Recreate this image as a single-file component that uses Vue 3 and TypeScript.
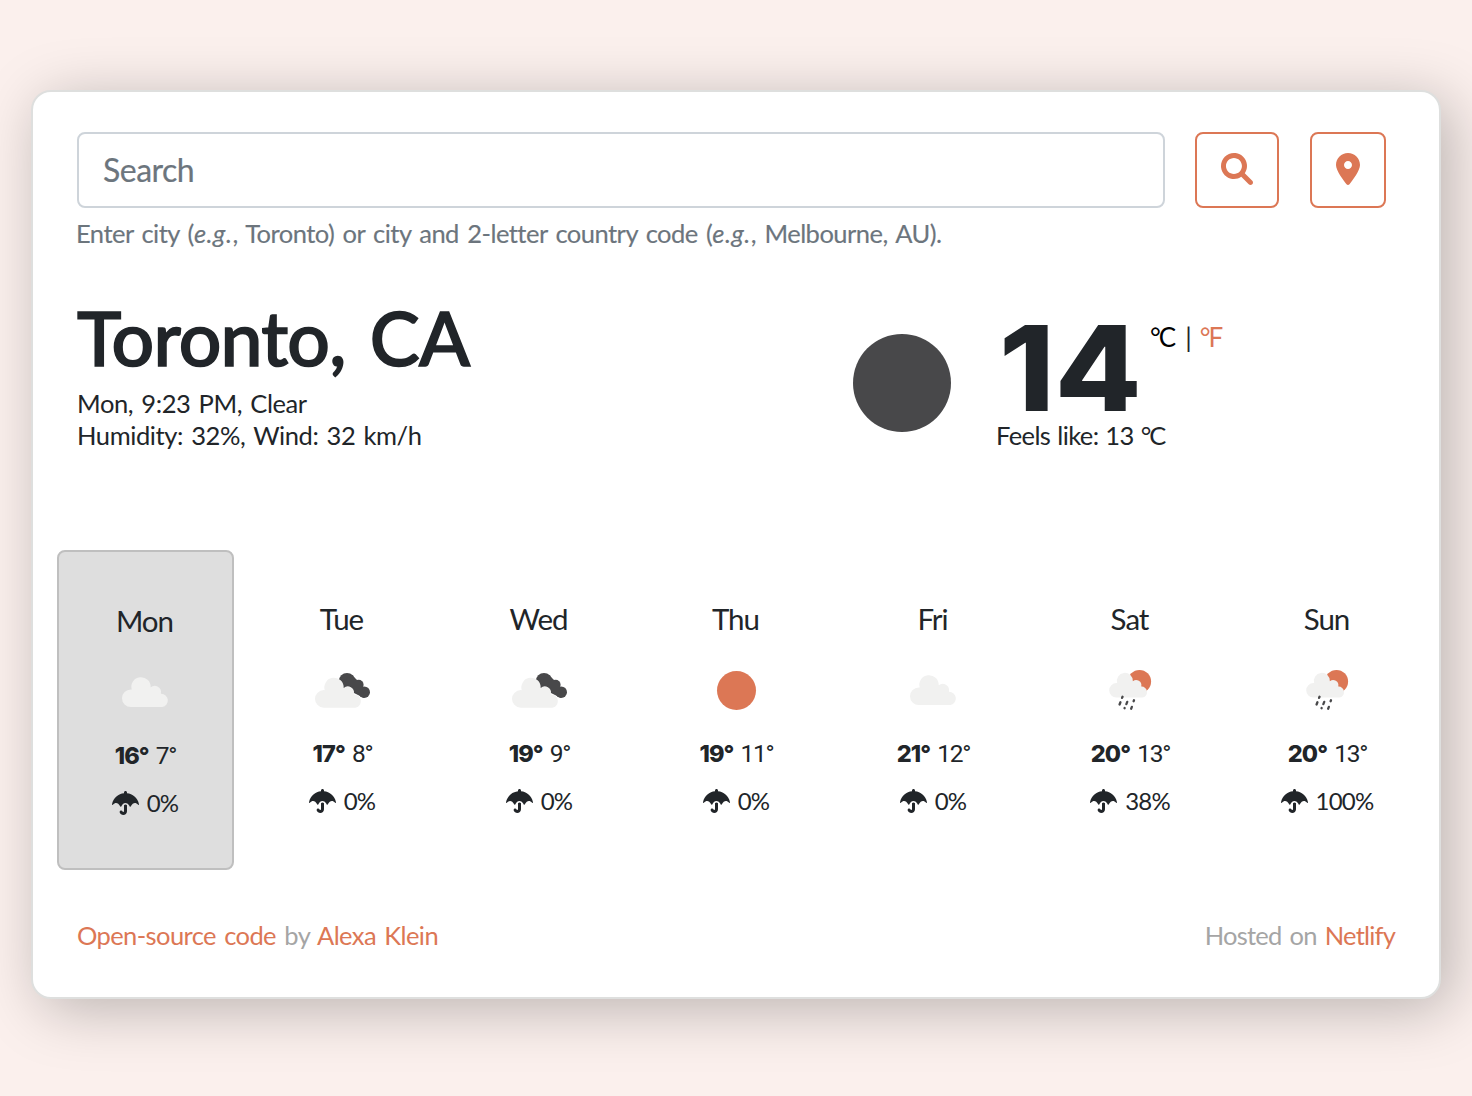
<script setup lang="ts">
type Icon = 'cloud' | 'clouds' | 'sun' | 'rain'

interface Day {
  name: string
  icon: Icon
  high: number
  low: number
  rain: number
}

const days: Day[] = [
  { name: 'Mon', icon: 'cloud', high: 16, low: 7, rain: 0 },
  { name: 'Tue', icon: 'clouds', high: 17, low: 8, rain: 0 },
  { name: 'Wed', icon: 'clouds', high: 19, low: 9, rain: 0 },
  { name: 'Thu', icon: 'sun', high: 19, low: 11, rain: 0 },
  { name: 'Fri', icon: 'cloud', high: 21, low: 12, rain: 0 },
  { name: 'Sat', icon: 'rain', high: 20, low: 13, rain: 38 },
  { name: 'Sun', icon: 'rain', high: 20, low: 13, rain: 100 },
]

const drops = [
  [42.3, 57.3, 0.6],
  [40, 63.4, 1.1],
  [46.8, 63, 1.1],
  [53.8, 60.7, 0.5],
  [44.6, 68.1, 0.1],
  [51.5, 67.8, 0.9],
]

const cloud =
  'M8.8 29.4A8.8 8.8 0 0 1 8.8 11.8L9.7 11.9A9.7 9.7 0 1 1 28.7 9.6A6.3 6.3 0 0 1 38.9 15.6L39 16.1A6.7 6.7 0 0 1 40.3 29.4Z'
</script>

<template>
  <main class="page">
    <section class="card">
      <form class="search" @submit.prevent>
        <div class="field">Search</div>
        <button class="btn find" aria-label="Search">
          <svg width="32" height="32" viewBox="0 0 512 512">
            <path d="M500.3 443.7l-119.7-119.7c27.22-40.41 40.65-90.9 33.46-144.7C401.8 87.79 326.8 13.32 235.3 1.723C99.01-15.51-15.51 99.01 1.724 235.3c11.6 91.47 86.08 166.5 177.6 178.7c53.8 7.189 104.3-6.236 144.7-33.46l119.7 119.7c15.62 15.62 40.95 15.62 56.57 0C515.9 484.7 515.9 459.3 500.3 443.7zM79.1 208c0-70.58 57.42-128 128-128s128 57.42 128 128c0 70.58-57.42 128-128 128S79.1 278.6 79.1 208z" />
          </svg>
        </button>
        <button class="btn locate" aria-label="Use my location">
          <svg width="24" height="32" viewBox="0 0 384 512">
            <path d="M168.3 499.2C116.1 435 0 279.4 0 192C0 85.96 85.96 0 192 0C298 0 384 85.96 384 192C384 279.4 267 435 215.7 499.2C203.4 514.5 180.6 514.5 168.3 499.2H168.3zM192 256C227.3 256 256 227.3 256 192C256 156.7 227.3 128 192 128C156.7 128 128 156.7 128 192C128 227.3 156.7 256 192 256z" />
          </svg>
        </button>
      </form>
      <p class="hint">Enter city (<em>e.g.</em>, Toronto) or city and 2-letter country code (<em>e.g.</em>, Melbourne, AU).</p>

      <div class="current">
        <div class="place">
          <h1>Toronto, CA</h1>
          <p class="when">Mon, 9:23 PM, Clear</p>
          <p class="when">Humidity: 32%, Wind: 32 km/h</p>
        </div>
        <svg class="moon" width="98" height="98" viewBox="0 0 98 98"><circle cx="49" cy="49" r="49" /></svg>
        <div class="reading">
          <div class="now">
            <strong>14</strong>
            <span class="unit on">°C</span><span class="unit bar">|</span><a class="unit">°F</a>
          </div>
          <p class="feels">Feels like: 13 <span class="deg">°C</span></p>
        </div>
      </div>

      <div class="forecast">
        <article v-for="(d, i) in days" :key="d.name" class="day" :class="{ active: i === 0 }">
          <h2>{{ d.name }}</h2>
          <svg class="weather" width="100" height="100" viewBox="1 0 100 100">
            <path v-if="d.icon === 'cloud'" class="pale" :d="cloud" transform="translate(27 35.7)" />
            <circle v-else-if="d.icon === 'sun'" class="warm" cx="50.5" cy="50.5" r="19.5" />
            <g v-else-if="d.icon === 'clouds'">
              <g class="dark">
                <circle cx="55" cy="41.1" r="8.1" />
                <circle cx="66.6" cy="44.7" r="5" />
                <circle cx="72.2" cy="52.2" r="5.8" />
                <path d="M50 42L60 35L70 45L72 58L60 52Z" />
              </g>
              <path class="pale" :d="cloud" transform="translate(23 38.3)" />
            </g>
            <g v-else>
              <circle class="warm" cx="59.5" cy="41.5" r="11.6" />
              <path class="pale" :d="cloud" transform="translate(29.2 33.3) scale(.825)" />
              <path
                v-for="([x, y, h], n) in drops"
                :key="n"
                class="drop"
                :d="`M${x + h * 0.4} ${y - h}L${x - h * 0.4} ${y + h}`"
              />
            </g>
          </svg>
          <p class="temps"><b>{{ d.high }}°</b><span>{{ d.low }}°</span></p>
          <p class="chance">
            <svg width="27" height="24" viewBox="0 0 576 512">
              <path d="M575.7 280.8C547.1 144.5 437.3 62.6 320 49.9V32c0-17.7-14.3-32-32-32s-32 14.3-32 32v17.9C138.3 62.6 29.5 144.5.3 280.8c-2.2 10.1 8.5 21.3 18.7 11.4 52-55 107.7-52.4 158.6 37 5.3 9.5 14.9 8.6 19.7 0 20.2-35.4 44.9-73.2 90.7-73.2 58.5 0 88.2 68.8 90.7 73.2 4.8 8.6 14.4 9.5 19.7 0 51-89.5 107.1-91.4 158.6-37 10.3 10 20.9-1.3 18.7-11.4zM256 301.7V432c0 8.8-7.2 16-16 16-7.8 0-13.2-5.3-15.1-10.7-5.9-16.7-24.1-25.4-40.8-19.5-16.7 5.9-25.4 24.2-19.5 40.8 11.2 31.9 41.6 53.3 75.4 53.3 44.1 0 80-35.9 80-80V301.6c-9.1-7.9-19.8-13.6-32-13.6-12.3.1-22.4 4.8-32 13.7z" />
            </svg>
            <span>{{ d.rain }}%</span>
          </p>
        </article>
      </div>

      <footer>
        <p class="credit"><a>Open-source code</a> by <a>Alexa Klein</a></p>
        <p class="host">Hosted on <a>Netlify</a></p>
      </footer>
    </section>
  </main>
</template>

<style>
body {
  background: #fbf0ed;
}
</style>

<style scoped>
* {
  box-sizing: border-box;
  margin: 0;
}
.page {
  height: 1096px;
  padding: 90px 31px 0 31px;
  overflow: hidden;
  font-family: Lato, 'Liberation Sans', sans-serif;
  font-size: 25.5px;
  line-height: 32px;
  color: #212529;
  white-space: nowrap;
}
.card {
  height: 909px;
  padding: 40px 43px 0 44px;
  background: #fff;
  border: 2px solid #dedfde;
  border-radius: 20px;
  box-shadow: 10px 10px 60px rgba(0, 0, 0, 0.26);
}
a {
  color: #dc7755;
}
.search {
  display: flex;
}
.field {
  width: 1088px;
  height: 76px;
  padding-left: 24px;
  border: 2px solid #ced4da;
  border-radius: 8px;
  font-size: 32px;
  line-height: 71px;
  letter-spacing: -0.5px;
  color: #6c757d;
  -webkit-text-stroke: 0.2px;
}
.btn {
  display: flex;
  align-items: center;
  justify-content: center;
  height: 76px;
  padding: 0 0 3px;
  background: none;
  border: 2px solid #dc7755;
  border-radius: 8px;
  fill: #dc7755;
}
.find {
  width: 84px;
  margin-left: 30px;
}
.locate {
  width: 76px;
  margin-left: 31px;
}
.hint {
  margin-top: 9px;
  margin-left: -1px;
  letter-spacing: -0.52px;
  word-spacing: 2.3px;
  color: #6c757d;
  -webkit-text-stroke: 0.15px;
}
.hint em {
  letter-spacing: 0.5px;
}
.current {
  display: flex;
  height: 301px;
  padding-top: 51px;
}
.place {
  width: 776px;
}
h1 {
  height: 87px;
  font-size: 75px;
  font-weight: 500;
  line-height: 74px;
  letter-spacing: -0.8px;
  word-spacing: 6px;
  -webkit-text-stroke: 1.6px;
}
.when {
  letter-spacing: -0.4px;
  word-spacing: 2px;
}
.moon {
  margin-top: 34px;
  fill: #48484a;
}
.reading {
  margin-left: 45px;
}
.now {
  display: flex;
  height: 119px;
}
.now strong {
  width: 154px;
  height: 119px;
  padding-left: 3px;
  font-family: Inter, sans-serif;
  font-size: 118px;
  font-weight: 800;
  line-height: 136px;
  transform: scaleX(1.07);
  transform-origin: 4px 0;
}
.unit {
  padding-top: 21px;
  font-size: 26px;
}
.unit.on {
  color: #000;
}
.unit.bar {
  margin: 0 10px 0 11px;
}
.unit,
.deg {
  letter-spacing: -2px;
}
.feels {
  letter-spacing: -0.6px;
  word-spacing: 1px;
}
.forecast {
  display: grid;
  grid-template-columns: repeat(7, 197px);
  margin-left: -30px;
}
.day {
  height: 320px;
  margin: 0 10px;
  padding-top: 51px;
  text-align: center;
}
.day.active {
  background: #dedede;
  border: 2px solid #bfbfbf;
  border-radius: 8px;
}
h2 {
  height: 39px;
  padding-right: 2px;
  font-size: 29.5px;
  font-weight: 400;
  line-height: 35px;
  letter-spacing: -1px;
}
.weather {
  display: block;
  margin: 0 auto;
}
.pale {
  fill: #f1f1f0;
}
.dark {
  fill: #48484a;
}
.warm {
  fill: #dc7755;
}
.drop {
  stroke: #48484a;
  stroke-width: 2.3;
  stroke-linecap: round;
}
.temps {
  display: flex;
  justify-content: center;
  gap: 7px;
  height: 32px;
  margin-top: -2px;
  font-family: Roboto, sans-serif;
  font-size: 24.5px;
  letter-spacing: -1.2px;
}
.temps b {
  font-family: Inter, sans-serif;
  font-size: 23.5px;
  font-weight: 800;
  letter-spacing: -0.9px;
}
.chance {
  display: flex;
  justify-content: center;
  gap: 8px;
  margin-top: 14px;
  padding-right: 1px;
  font-size: 24px;
  letter-spacing: -0.8px;
}
.chance svg {
  margin-top: 5px;
  fill: #212529;
}
.chance span {
  padding-top: 1px;
}
footer {
  display: flex;
  justify-content: space-between;
  padding: 49px 1px 0 0;
  letter-spacing: -0.6px;
  word-spacing: 2.4px;
  color: #a5a5a5;
}
.host {
  letter-spacing: -0.8px;
}
</style>
